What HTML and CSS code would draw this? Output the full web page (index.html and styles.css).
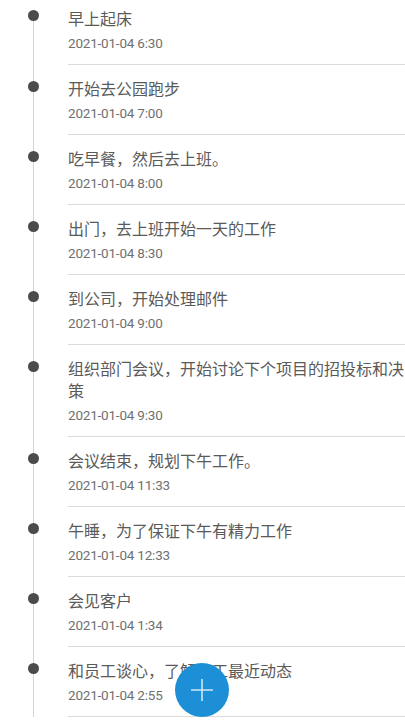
FILE: index.html
```html
<!DOCTYPE html>
<html lang="zh-CN">
<head>
    <meta charset="UTF-8">
    <meta name="viewport" content="width=device-width, initial-scale=1.0">
    <title>时间轴</title>
    <link rel="stylesheet" href="styles.css">
</head>
<body>
    <ul class="timeline">
        <li class="event">
            <div class="rail"><span class="dot"></span></div>
            <div class="event-body">
                <div class="event-title">早上起床</div>
                <div class="event-time">2021-01-04 6:30</div>
            </div>
        </li>
        <li class="event">
            <div class="rail"><span class="dot"></span></div>
            <div class="event-body">
                <div class="event-title">开始去公园跑步</div>
                <div class="event-time">2021-01-04 7:00</div>
            </div>
        </li>
        <li class="event">
            <div class="rail"><span class="dot"></span></div>
            <div class="event-body">
                <div class="event-title">吃早餐，然后去上班。</div>
                <div class="event-time">2021-01-04 8:00</div>
            </div>
        </li>
        <li class="event">
            <div class="rail"><span class="dot"></span></div>
            <div class="event-body">
                <div class="event-title">出门，去上班开始一天的工作</div>
                <div class="event-time">2021-01-04 8:30</div>
            </div>
        </li>
        <li class="event">
            <div class="rail"><span class="dot"></span></div>
            <div class="event-body">
                <div class="event-title">到公司，开始处理邮件</div>
                <div class="event-time">2021-01-04 9:00</div>
            </div>
        </li>
        <li class="event">
            <div class="rail"><span class="dot"></span></div>
            <div class="event-body">
                <div class="event-title">组织部门会议，开始讨论下个项目的招投标和决策</div>
                <div class="event-time">2021-01-04 9:30</div>
            </div>
        </li>
        <li class="event">
            <div class="rail"><span class="dot"></span></div>
            <div class="event-body">
                <div class="event-title">会议结束，规划下午工作。</div>
                <div class="event-time">2021-01-04 11:33</div>
            </div>
        </li>
        <li class="event">
            <div class="rail"><span class="dot"></span></div>
            <div class="event-body">
                <div class="event-title">午睡，为了保证下午有精力工作</div>
                <div class="event-time">2021-01-04 12:33</div>
            </div>
        </li>
        <li class="event">
            <div class="rail"><span class="dot"></span></div>
            <div class="event-body">
                <div class="event-title">会见客户</div>
                <div class="event-time">2021-01-04 1:34</div>
            </div>
        </li>
        <li class="event">
            <div class="rail"><span class="dot"></span></div>
            <div class="event-body">
                <div class="event-title">和员工谈心，了解员工最近动态</div>
                <div class="event-time">2021-01-04 2:55</div>
            </div>
        </li>
    </ul>

    <button class="fab" aria-label="添加">
        <svg width="24" height="24" viewBox="0 0 24 24">
            <path d="M12 1v22M1 12h22" stroke="#cfe8f8" stroke-width="1.6" fill="none"/>
        </svg>
    </button>
</body>
</html>
```

FILE: styles.css
```css
body {
    margin: 0;
    background: #fff;
    font-family: Roboto, "Noto Sans CJK SC", sans-serif;
    overflow: hidden;
}

.timeline {
    list-style: none;
    margin: 0;
    padding: 0;
}

.event {
    display: flex;
}

.rail {
    width: 68px;
    flex-shrink: 0;
    background: linear-gradient(#d4d4d4, #d4d4d4) no-repeat 33px 0 / 1px 100%;
}

.event:first-child .rail {
    background-position: 33px 16px;
}

.dot {
    display: block;
    width: 11px;
    height: 11px;
    margin: 16px 0 0 28px;
    border-radius: 50%;
    background: #4b4b4b;
}

.event:first-child .dot {
    margin-top: 10px;
}

.event-body {
    flex: 1;
    min-width: 0;
    padding: 12px 0 11px;
    border-bottom: 1px solid #dcdcdc;
}

.event:first-child .event-body {
    padding-top: 7px;
}

.event-title {
    font-family: "Noto Sans CJK SC", sans-serif;
    font-size: 16px;
    line-height: 22px;
    color: #5a5a5a;
}

.event-time {
    margin-top: 4px;
    font-size: 13.5px;
    line-height: 20px;
    letter-spacing: -0.2px;
    color: #707070;
}

.fab {
    position: fixed;
    left: 175px;
    bottom: 3px;
    width: 54px;
    height: 54px;
    border: none;
    border-radius: 50%;
    background: #1d8fd7;
    display: flex;
    align-items: center;
    justify-content: center;
    padding: 0;
    cursor: pointer;
}
```
